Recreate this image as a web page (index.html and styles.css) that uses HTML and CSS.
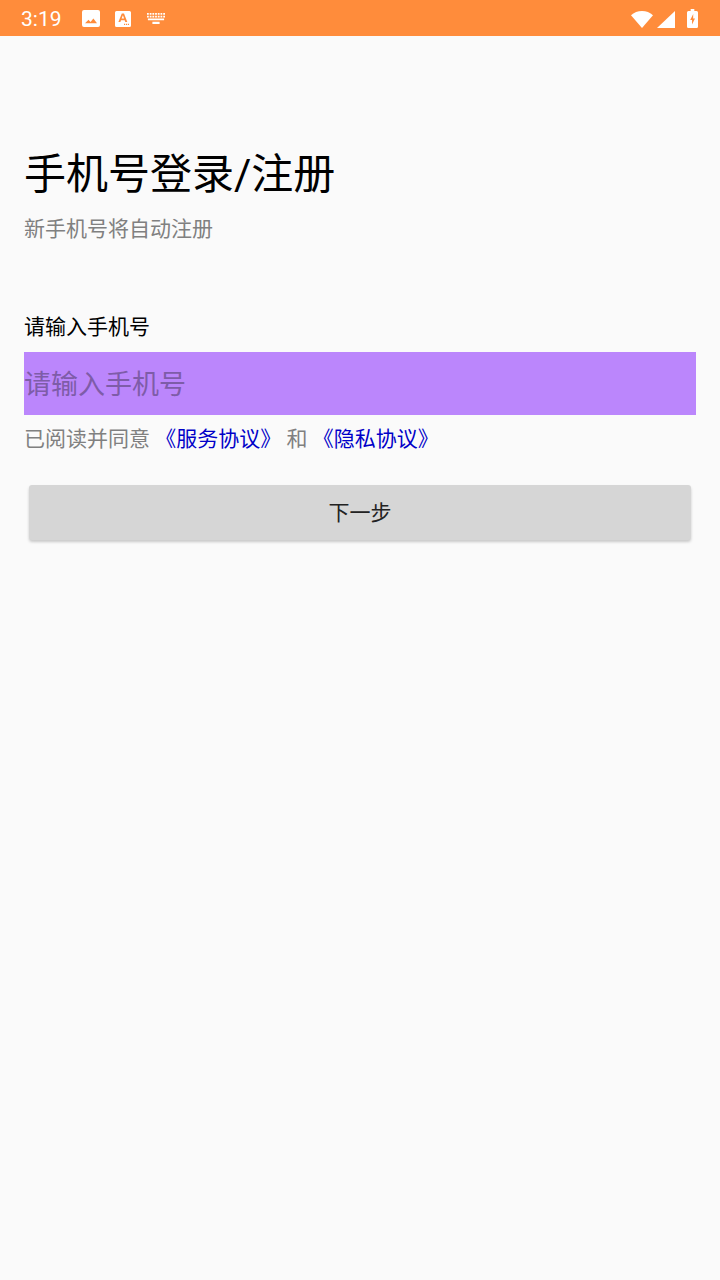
FILE: index.html
```html
<!DOCTYPE html>
<html lang="zh-CN">
<head>
    <meta charset="UTF-8">
    <meta name="viewport" content="width=device-width, initial-scale=1.0">
    <title>手机号登录/注册</title>
    <link rel="stylesheet" href="styles.css">
</head>
<body>
    <div class="status-bar">
        <div class="status-left">
            <span class="clock">3:19</span>
            <svg class="icon-image" width="18" height="17" viewBox="0 0 18 18" preserveAspectRatio="none">
                <path fill="#fff" fill-rule="evenodd" d="M2 0h14a2 2 0 0 1 2 2v14a2 2 0 0 1-2 2H2a2 2 0 0 1-2-2V2a2 2 0 0 1 2-2zM3 14h12l-3.600-5-2.900 3.600-2-2.400z"/>
            </svg>
            <svg class="icon-font" width="16" height="16" viewBox="0 0 16 16">
                <path fill="#fff" fill-rule="evenodd" d="M1.500 0h13A1.500 1.500 0 0 1 16 1.500v13a1.500 1.500 0 0 1-1.500 1.500h-13A1.500 1.500 0 0 1 0 14.500v-13A1.500 1.500 0 0 1 1.500 0zM6.800 2.500 3.400 11h2l.6-1.700h3.700l.6 1.700h2L9 2.500zM6.600 7.600 7.900 4.300l1.200 3.300zM9 12.800h1.200V14H9zm2 0h1.200V14H11zm2 0h1V14h-1z"/>
            </svg>
            <svg class="icon-keyboard" width="18" height="11" viewBox="0 0 20 12" preserveAspectRatio="none">
                <path fill="#fff" d="M0 0h2v2H0zm3 0h2v2H3zm3 0h2v2H6zm3 0h2v2H9zm3 0h2v2h-2zm3 0h2v2h-2zm3 0h2v2h-2zM0 3h2v2H0zm3 0h2v2H3zm3 0h2v2H6zm3 0h2v2H9zm3 0h2v2h-2zm3 0h2v2h-2zm3 0h2v2h-2zM1 6h18v2H1zM6 9.500h8V12H6z"/>
            </svg>
        </div>
        <div class="status-right">
            <svg class="icon-wifi" width="22" height="17" viewBox="0 0 22 17">
                <path fill="#fff" d="M11 17 0 4.200C3 1.600 6.800 0 11 0s8 1.600 11 4.200z"/>
            </svg>
            <svg class="icon-signal" width="18" height="17" viewBox="0 0 18 18" preserveAspectRatio="none">
                <path fill="#fff" d="M0 18 18 0v18z"/>
            </svg>
            <svg class="icon-battery" width="11" height="19" viewBox="0 0 12 19" preserveAspectRatio="none">
                <path fill="#fff" fill-rule="evenodd" d="M4 0h4v2h2.500A1.500 1.500 0 0 1 12 3.500v14a1.500 1.500 0 0 1-1.500 1.500h-9A1.500 1.500 0 0 1 0 17.500v-14A1.500 1.500 0 0 1 1.500 2H4zM6.800 5 3.500 11h2v4.500L8.700 9.500h-2z"/>
            </svg>
        </div>
    </div>

    <div class="content">
        <h1>手机号登录/注册</h1>
        <p class="subtitle">新手机号将自动注册</p>

        <label class="phone-label" for="phone">请输入手机号</label>
        <input class="phone-input" id="phone" type="tel" placeholder="请输入手机号">

        <p class="agreement">
            已阅读并同意 <a href="#">《服务协议》</a> 和 <a href="#">《隐私协议》</a>
        </p>

        <button class="next-btn">下一步</button>
    </div>
</body>
</html>
```

FILE: styles.css
```css
body {
    margin: 0;
    height: 1280px;
    overflow: hidden;
    background-color: #fafafa;
    color: #000000;
    font-family: Roboto, "Noto Sans CJK SC", sans-serif;
}

.status-bar {
    display: flex;
    justify-content: space-between;
    align-items: center;
    height: 36px;
    padding: 1px 22px 0 21px;
    box-sizing: border-box;
    background-color: #ff8c3b;
}

.status-left {
    display: flex;
    align-items: center;
}

.clock {
    margin-right: 20px;
    font-size: 21px;
    color: #ffffff;
}

.icon-image {
    margin-right: 15px;
}

.icon-font {
    margin-right: 16px;
}

.status-right {
    display: flex;
    align-items: flex-end;
}

.icon-signal {
    margin-left: 4px;
}

.icon-battery {
    margin-left: 12px;
}

.content {
    display: flex;
    flex-direction: column;
    padding: 0 24px;
}

h1 {
    margin: 108px 0 0;
    font-size: 42px;
    font-weight: normal;
    line-height: 62px;
}

.subtitle {
    margin: 8px 0 0;
    font-size: 21px;
    line-height: 31px;
    color: #808080;
}

.phone-label {
    margin-top: 67px;
    font-size: 21px;
    line-height: 31px;
}

.phone-input {
    height: 63px;
    box-sizing: border-box;
    margin-top: 9px;
    padding: 2px 0 0;
    border: none;
    outline: none;
    background-color: #bb86fc;
    font-family: inherit;
    font-size: 27px;
}

.phone-input::placeholder {
    color: #7e5ca8;
    opacity: 1;
}

.agreement {
    margin: 9px 0 0;
    font-size: 21px;
    line-height: 31px;
    color: #808080;
}

.agreement a {
    color: #0000c8;
    text-decoration: none;
}

.next-btn {
    height: 55px;
    margin: 30px 5px 0;
    padding: 0 0 4px;
    border: none;
    border-radius: 3px;
    background-color: #d6d6d6;
    box-shadow: 0 2px 3px rgba(0, 0, 0, 0.2);
    font-family: inherit;
    font-size: 21px;
    color: #222222;
}
```
